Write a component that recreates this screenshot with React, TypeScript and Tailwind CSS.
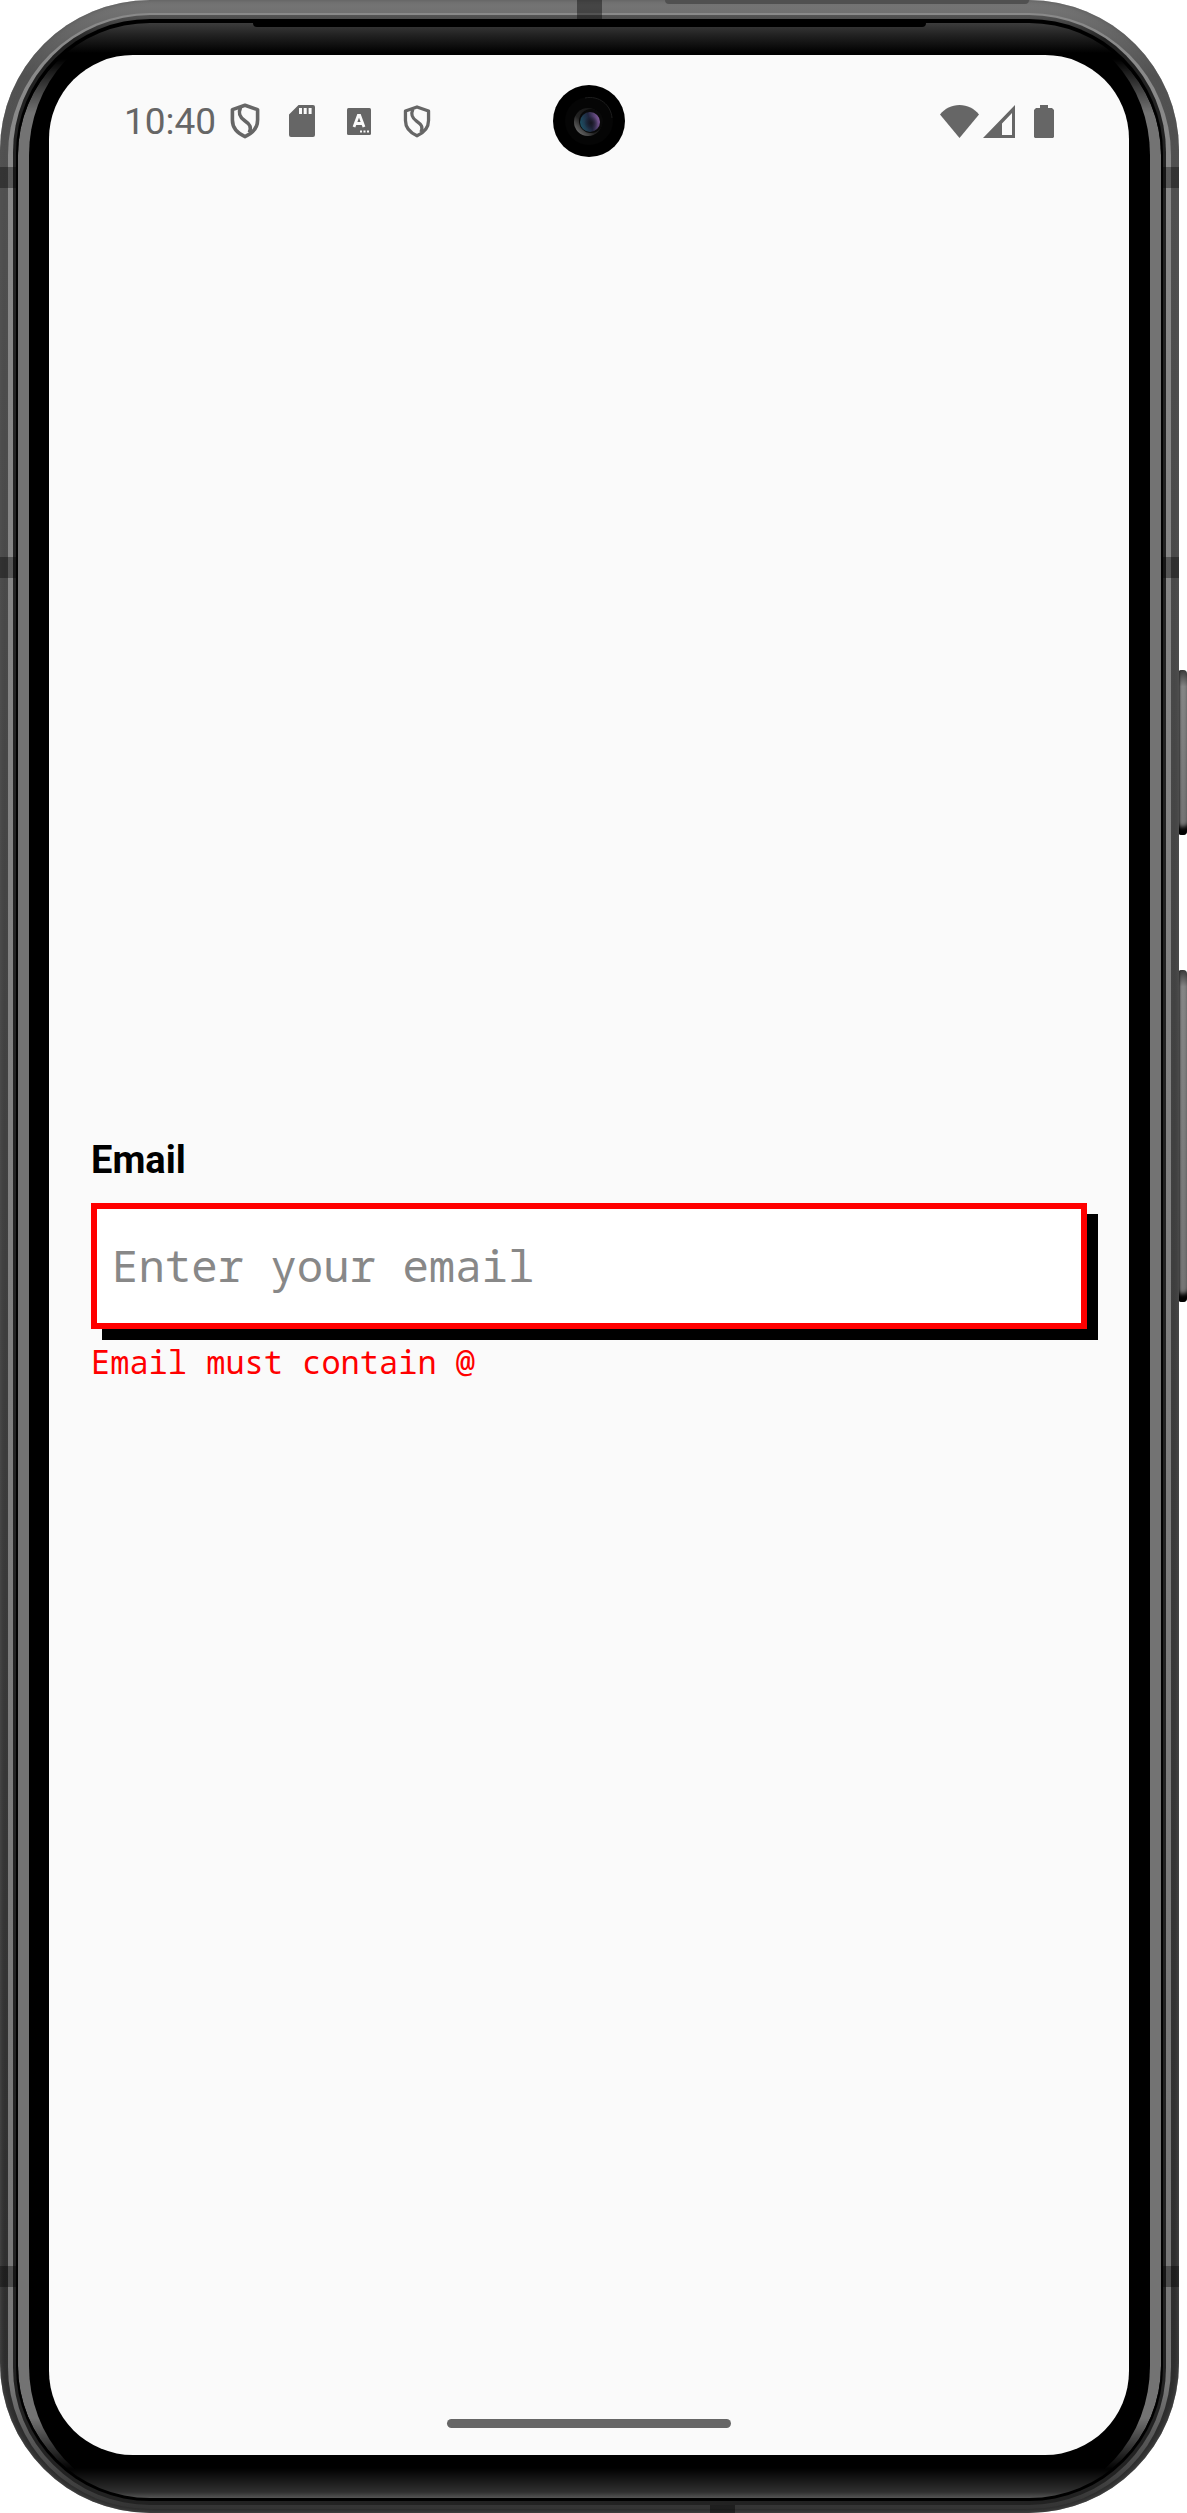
import { useState } from "react";

function ShieldIcon({ className }: { className: string }) {
  return (
    <svg viewBox="0 0 30 36" className={className} fill="none" stroke="#666" strokeWidth="3.6" strokeLinejoin="round" aria-hidden="true">
      <path d="M15 2.2 27.6 6.6V17c0 8-5 13.200-12.600 16.600C7.400 30.200 2.400 25 2.400 17V6.600Z" />
      <path d="M10.500 4.500C8 10.500 9.500 14 14.500 17.500c5.500 3.800 7.200 6.500 4.800 12" />
    </svg>
  );
}

function SdCardIcon() {
  return (
    <svg viewBox="0 0 26 32" className="h-8 w-[26px]" aria-hidden="true">
      <path fill="#666" fillRule="evenodd" d="M9.500 0H24a2 2 0 0 1 2 2v28a2 2 0 0 1-2 2H2a2 2 0 0 1-2-2V9.500ZM10 3v6h3V3Zm4.700 0v6h3V3Zm4.900 0v6h3V3Z" />
    </svg>
  );
}

function LanguageIcon() {
  return (
    <svg viewBox="0 0 24 27" className="h-[27px] w-6" aria-hidden="true">
      <rect width="24" height="27" rx="1.5" fill="#666" />
      <path d="m7 19 4.300-11.500h1.400l4.300 11.500M8.500 15.500h7" fill="none" stroke="#fafafa" strokeWidth="2.800" />
      <path d="M13 22.500h2v2h-2zM16.500 22.500h2v2h-2zM20 22.500h2v2h-2z" fill="#fafafa" />
    </svg>
  );
}

function WifiIcon() {
  return (
    <svg viewBox="0 0 39 33" className="h-[33px] w-[39px]" aria-hidden="true">
      <path d="M0 9.500C5 3.500 11.500 0 19.500 0S34 3.500 39 9.500L19.500 33Z" fill="#666" />
    </svg>
  );
}

function SignalIcon() {
  return (
    <svg viewBox="0 0 32 33" className="h-[33px] w-8" aria-hidden="true">
      <path fill="#666" fillRule="evenodd" d="M32 0v33H0ZM29 8 19 18.500V30h10Z" />
    </svg>
  );
}

function BatteryIcon() {
  return (
    <svg viewBox="0 0 20 33" className="h-[33px] w-5" aria-hidden="true">
      <path fill="#666" d="M6 0h8v3h4l2 2v27l-1 1H1l-1-1V5l2-2h4Z" />
    </svg>
  );
}

function Camera() {
  return (
    <svg viewBox="0 0 72 72" className="absolute top-[30px] left-1/2 size-[72px] -translate-x-1/2" aria-hidden="true">
      <defs>
        <linearGradient id="rim" x1="0" y1="1" x2="1" y2="0">
          <stop offset="0" stopColor="#888" />
          <stop offset=".4" stopColor="#222" />
          <stop offset="1" stopColor="#111" />
        </linearGradient>
        <linearGradient id="lens" x1="0" y1=".6" x2="1" y2=".3">
          <stop offset="0" stopColor="#1d5063" />
          <stop offset=".5" stopColor="#20243c" />
          <stop offset="1" stopColor="#8a5fa3" />
        </linearGradient>
        <radialGradient id="pupil">
          <stop offset="0" stopColor="#151520" />
          <stop offset="1" stopColor="#151520" stopOpacity="0" />
        </radialGradient>
      </defs>
      <circle cx="36" cy="36" r="36" />
      <circle cx="36" cy="36" r="24" fill="#050505" />
      <path d="M32 13c14-3 26 7 27 20" fill="none" stroke="#1c1c1c" />
      <circle cx="35" cy="37" r="14" fill="url(#rim)" />
      <circle cx="38" cy="36" r="12" fill="#090909" />
      <circle cx="37" cy="37" r="10" fill="url(#lens)" />
      <circle cx="38" cy="38" r="7" fill="url(#pupil)" />
    </svg>
  );
}

function StatusBar() {
  return (
    <header className="relative flex h-[132px] items-center justify-between px-[75px]">
      <div className="flex items-center">
        <time className="mr-[14px] text-[37px] leading-none text-[#666]">10:40</time>
        <ShieldIcon className="mr-[29px] h-9 w-[30px]" />
        <SdCardIcon />
        <span className="w-8" />
        <LanguageIcon />
        <span className="w-8" />
        <ShieldIcon className="h-[33px] w-7" />
      </div>
      <Camera />
      <div className="flex items-center">
        <WifiIcon />
        <span className="w-1" />
        <SignalIcon />
        <span className="w-[19px]" />
        <BatteryIcon />
      </div>
    </header>
  );
}

function EmailField() {
  const [email, setEmail] = useState("");
  return (
    <div className="flex flex-col">
      <label htmlFor="email" className="mb-5 text-[38px] leading-[45px] font-bold text-black">
        Email
      </label>
      <input
        id="email"
        type="email"
        value={email}
        onChange={(e) => setEmail(e.target.value)}
        placeholder="Enter your email"
        aria-invalid="true"
        aria-describedby="email-error"
        className="h-[126px] w-full rounded-none border-[6px] border-[#ff0000] bg-white px-[15px] pb-[2px] font-['Noto_Sans_Mono','DejaVu_Sans_Mono',monospace] text-[44px] text-black shadow-[11px_11px_0_#000] outline-none placeholder:text-[#888]"
      />
      <p id="email-error" className="mt-[11px] font-['Noto_Sans_Mono','DejaVu_Sans_Mono',monospace] text-[32px] leading-[44px] text-[#ff0000]">
        Email must contain @
      </p>
    </div>
  );
}

function Screen() {
  return (
    <div className="relative flex flex-1 flex-col rounded-[84px] bg-[#fafafa]">
      <StatusBar />
      <main className="flex flex-1 flex-col justify-center px-[42px] pt-3">
        <EmailField />
      </main>
      <footer className="flex h-[132px] items-end justify-center pb-[27px]">
        <div className="h-[9px] w-[284px] rounded-full bg-[#666]" />
      </footer>
    </div>
  );
}

function AntennaBands() {
  return (
    <>
      <i className="absolute top-[167px] left-0 h-[21px] w-4 bg-black/35" />
      <i className="absolute top-[557px] left-0 h-[21px] w-4 bg-black/35" />
      <i className="absolute bottom-[226px] left-0 h-[21px] w-4 bg-black/35" />
      <i className="absolute top-[167px] right-0 h-[21px] w-4 bg-black/35" />
      <i className="absolute top-[557px] right-0 h-[21px] w-4 bg-black/35" />
      <i className="absolute bottom-[226px] right-0 h-[21px] w-4 bg-black/35" />
      <i className="absolute top-0 left-[577px] h-5 w-[25px] bg-black/40" />
      <i className="absolute bottom-0 left-[710px] h-2 w-[25px] bg-black/40" />
      <i className="absolute top-0 right-[150px] h-1 w-[364px] rounded-b-lg bg-[#505050]" />
    </>
  );
}

export default function App() {
  return (
    <div className="relative flex min-h-screen bg-white pr-2 font-[Roboto,sans-serif]">
      <i className="absolute top-[670px] right-0 h-[165px] w-[9px] rounded-sm bg-linear-to-b from-[#3c3c3c] from-0% via-[#858585] via-10% to-[#757575] to-90% shadow-[inset_0_-10px_4px_-2px_#000,inset_2px_0_2px_#333]" />
      <i className="absolute top-[970px] right-0 h-[332px] w-[9px] rounded-sm bg-linear-to-b from-[#3c3c3c] from-0% via-[#858585] via-5% to-[#757575] to-95% shadow-[inset_0_-10px_4px_-2px_#000,inset_2px_0_2px_#333]" />
      <div className="relative flex flex-1 rounded-[150px] bg-linear-to-b from-[#777] from-0% via-[#525252] via-[3%] to-[#2c2c2c] px-2 pt-[13px] pb-1 shadow-[inset_0_0_5px_#555]">
        <div className="flex flex-1 rounded-[142px] bg-linear-to-b from-[#8a8a8a] from-0% via-[#777] via-95% to-[#333] px-[5px] pt-[2px] pb-1">
          <div className="flex flex-1 rounded-[137px] bg-linear-to-b from-[#555] to-[#222] to-[1%] px-[3px] pt-1 pb-1">
            <div className="flex flex-1 rounded-[134px] bg-black px-[2px] pt-1 pb-[3px]">
              <div className="relative flex flex-1 rounded-[132px] bg-[linear-gradient(to_bottom,#3c3c3c,#222_12px,#000_30px,#000_calc(100%_-_30px),#303030_calc(100%_-_6px),#555)] pt-8 pr-8 pb-[43px] pl-[31px]">
                <i className="absolute inset-0 rounded-[132px] border-x-[11px] border-[#737373] mask-[linear-gradient(to_bottom,transparent_36px,#000_90px,#000_calc(100%_-_80px),transparent_calc(100%_-_28px))]" />
                <i className="absolute inset-x-[235px] top-0 h-1 rounded-b-[4px] bg-black" />
                <Screen />
              </div>
            </div>
          </div>
        </div>
        <AntennaBands />
      </div>
    </div>
  );
}
